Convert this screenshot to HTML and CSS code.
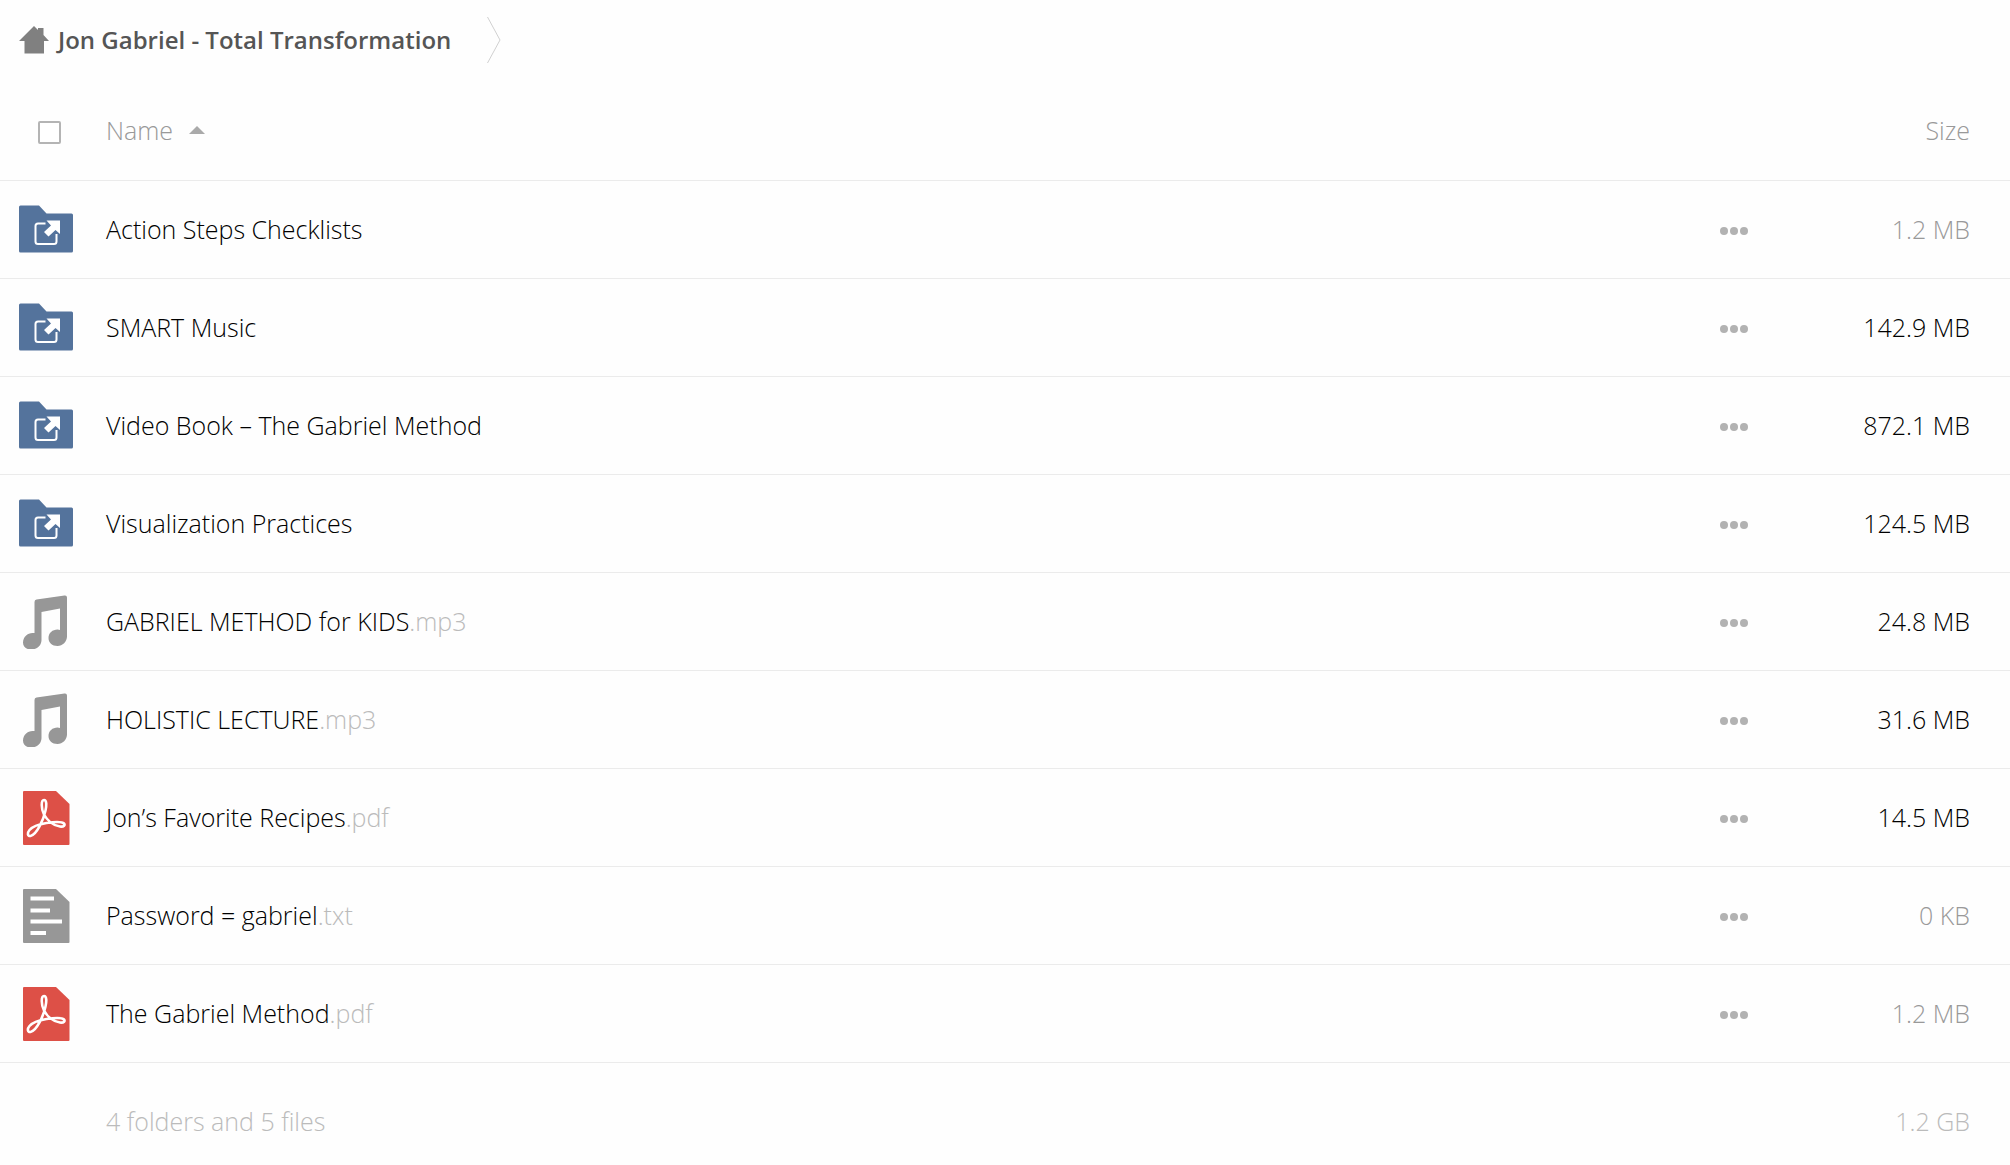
FILE: index.html
```html
<!DOCTYPE html>
<html lang="en">
<head>
    <meta charset="UTF-8">
    <meta name="viewport" content="width=device-width, initial-scale=1.0">
    <title>Jon Gabriel - Total Transformation</title>
    <link rel="stylesheet" href="styles.css">
</head>
<body>
    <!-- Shared icons -->
    <svg class="sprite" aria-hidden="true">
        <symbol id="icon-folder" viewBox="0 0 54 54">
            <path fill="#54739c" d="M1.500 2.500H20L27.500 10.500H52.500A1.500 1.500 0 0 1 54 12V48A1.500 1.500 0 0 1 52.500 49.500H1.500A1.500 1.500 0 0 1 0 48V4A1.500 1.500 0 0 1 1.500 2.500Z"/>
            <path fill="none" stroke="#fff" stroke-width="2" d="M26.500 20.500H19A2.500 2.500 0 0 0 16.500 23V38.500A2.500 2.500 0 0 0 19 41H35A2.500 2.500 0 0 0 37.500 38.500V31"/>
            <path fill="#fff" d="M27.500 17.500H41V31L36.500 27L29.500 33.500L25 29L32 22.500Z"/>
        </symbol>
        <symbol id="icon-music" viewBox="0 0 54 54">
            <path fill="#979797" fill-rule="evenodd" d="M17.500 4.500L45.500 .5Q48 .2 48 2.500V41.500C48 46.500 43.500 51 38.500 51C33 51 29.500 47.500 29.500 43C29.500 38 33.500 34.500 38.500 34.500Q40 34.500 41 35V13.500L22.500 17V45C22.500 50.500 18 54.500 12 54.500C7 54.500 4 51.500 4 47.500C4 42 8.500 38 13.500 38H15.500V7Q15.500 4.800 17.500 4.500Z"/>
        </symbol>
        <symbol id="icon-pdf" viewBox="0 0 54 54">
            <path fill="#dd5047" d="M5 0H37L50.500 13V53Q50.500 54 49.500 54H5Q4 54 4 53V1Q4 0 5 0Z"/>
            <path fill="none" stroke="#fff" stroke-width="2.600" stroke-linejoin="round" d="M25 23.500C28 29 34 34.500 41 35.500C45 36 46.500 34 45 32.500C42.500 30 34 31 27.500 32C20 33.200 13.500 35.500 10.500 39C8 42 8.500 45.500 11.500 45C17.500 44 24.500 29 26.500 19.500C27.500 15 28 9 25 9C22 9 22 17.500 25 23.500Z"/>
        </symbol>
        <symbol id="icon-txt" viewBox="0 0 54 54">
            <path fill="#979797" d="M5 0H37L50.500 13V53Q50.500 54 49.500 54H5Q4 54 4 53V1Q4 0 5 0Z"/>
            <path fill="#fff" d="M11.500 7.500H35V11.500H11.500ZM11.500 19.500H31V23.500H11.500ZM11.500 30.500H43V34.500H11.500ZM11.500 42H27V46H11.500Z"/>
        </symbol>
        <symbol id="icon-dots" viewBox="0 0 28 8">
            <circle cx="4" cy="4" r="4"/>
            <circle cx="14" cy="4" r="4"/>
            <circle cx="24" cy="4" r="4"/>
        </symbol>
    </svg>

    <nav class="breadcrumb">
        <a href="#" class="crumb">
            <svg class="home-icon" viewBox="0 0 30 28" aria-hidden="true">
                <path fill="#808080" d="M0 15L15 0L19 4V2H24.500V9L30 15H25V27.500H5.500V15Z"/>
            </svg>
            <span>Jon Gabriel - Total Transformation</span>
        </a>
        <svg class="crumb-arrow" viewBox="0 0 14 46" aria-hidden="true">
            <path fill="none" stroke="#d0d0d0" d="M.5 0L13 23L.5 46"/>
        </svg>
    </nav>

    <table class="files">
        <thead>
            <tr>
                <th class="col-icon"><input type="checkbox" class="select-all" aria-label="Select all"></th>
                <th class="col-name">
                    <button type="button" class="sort">Name
                        <svg class="sort-arrow" viewBox="0 0 16 8" aria-hidden="true"><path fill="#aaa" d="M0 8L8 0L16 8Z"/></svg>
                    </button>
                </th>
                <th class="col-menu"></th>
                <th class="col-size"><button type="button" class="sort">Size</button></th>
            </tr>
        </thead>
        <tbody>
            <tr>
                <td class="col-icon"><svg class="file-icon"><use href="#icon-folder"/></svg></td>
                <td class="col-name"><a href="#">Action Steps Checklists</a></td>
                <td class="col-menu"><button type="button" class="menu" aria-label="More"><svg><use href="#icon-dots"/></svg></button></td>
                <td class="col-size small">1.2 MB</td>
            </tr>
            <tr>
                <td class="col-icon"><svg class="file-icon"><use href="#icon-folder"/></svg></td>
                <td class="col-name"><a href="#">SMART Music</a></td>
                <td class="col-menu"><button type="button" class="menu" aria-label="More"><svg><use href="#icon-dots"/></svg></button></td>
                <td class="col-size">142.9 MB</td>
            </tr>
            <tr>
                <td class="col-icon"><svg class="file-icon"><use href="#icon-folder"/></svg></td>
                <td class="col-name"><a href="#">Video Book – The Gabriel Method</a></td>
                <td class="col-menu"><button type="button" class="menu" aria-label="More"><svg><use href="#icon-dots"/></svg></button></td>
                <td class="col-size">872.1 MB</td>
            </tr>
            <tr>
                <td class="col-icon"><svg class="file-icon"><use href="#icon-folder"/></svg></td>
                <td class="col-name"><a href="#">Visualization Practices</a></td>
                <td class="col-menu"><button type="button" class="menu" aria-label="More"><svg><use href="#icon-dots"/></svg></button></td>
                <td class="col-size">124.5 MB</td>
            </tr>
            <tr>
                <td class="col-icon"><svg class="file-icon"><use href="#icon-music"/></svg></td>
                <td class="col-name"><a href="#">GABRIEL METHOD for KIDS<span class="ext">.mp3</span></a></td>
                <td class="col-menu"><button type="button" class="menu" aria-label="More"><svg><use href="#icon-dots"/></svg></button></td>
                <td class="col-size">24.8 MB</td>
            </tr>
            <tr>
                <td class="col-icon"><svg class="file-icon"><use href="#icon-music"/></svg></td>
                <td class="col-name"><a href="#">HOLISTIC LECTURE<span class="ext">.mp3</span></a></td>
                <td class="col-menu"><button type="button" class="menu" aria-label="More"><svg><use href="#icon-dots"/></svg></button></td>
                <td class="col-size">31.6 MB</td>
            </tr>
            <tr>
                <td class="col-icon"><svg class="file-icon"><use href="#icon-pdf"/></svg></td>
                <td class="col-name"><a href="#">Jon’s Favorite Recipes<span class="ext">.pdf</span></a></td>
                <td class="col-menu"><button type="button" class="menu" aria-label="More"><svg><use href="#icon-dots"/></svg></button></td>
                <td class="col-size">14.5 MB</td>
            </tr>
            <tr>
                <td class="col-icon"><svg class="file-icon"><use href="#icon-txt"/></svg></td>
                <td class="col-name"><a href="#">Password = gabriel<span class="ext">.txt</span></a></td>
                <td class="col-menu"><button type="button" class="menu" aria-label="More"><svg><use href="#icon-dots"/></svg></button></td>
                <td class="col-size small">0 KB</td>
            </tr>
            <tr>
                <td class="col-icon"><svg class="file-icon"><use href="#icon-pdf"/></svg></td>
                <td class="col-name"><a href="#">The Gabriel Method<span class="ext">.pdf</span></a></td>
                <td class="col-menu"><button type="button" class="menu" aria-label="More"><svg><use href="#icon-dots"/></svg></button></td>
                <td class="col-size small">1.2 MB</td>
            </tr>
        </tbody>
        <tfoot>
            <tr>
                <td class="col-icon"></td>
                <td class="col-name">4 folders and 5 files</td>
                <td class="col-menu"></td>
                <td class="col-size">1.2 GB</td>
            </tr>
        </tfoot>
    </table>
</body>
</html>
```

FILE: styles.css
```css
* {
    box-sizing: border-box;
}

body {
    margin: 0;
    background: #fefefe;
    color: #000;
    font-family: "Open Sans", "Noto Sans", sans-serif;
    font-size: 25px;
    font-weight: 300;
    line-height: 36px;
}

a {
    color: inherit;
    text-decoration: none;
}

button {
    padding: 0;
    border: none;
    background: none;
    color: inherit;
    font: inherit;
    cursor: pointer;
}

svg {
    display: block;
}

.sprite {
    position: absolute;
    width: 0;
    height: 0;
}

.breadcrumb {
    display: flex;
    align-items: center;
    gap: 36px;
    height: 80px;
    padding-left: 19px;
}

.crumb {
    display: flex;
    align-items: center;
    gap: 9px;
    color: #555;
    font-size: 24px;
    font-weight: 600;
}

.home-icon {
    width: 30px;
    height: 28px;
}

.crumb-arrow {
    width: 14px;
    height: 46px;
}

.files {
    width: 100%;
    border-collapse: separate;
    border-spacing: 0;
    table-layout: fixed;
}

.files th,
.files td {
    height: 98px;
    padding: 0 0 2px;
    border-bottom: 1px solid #ebebeb;
    font-weight: 300;
    text-align: left;
    vertical-align: middle;
}

.files th {
    height: 101px;
    padding-bottom: 0;
    color: #999;
}

.files .col-icon {
    width: 106px;
    padding-bottom: 0;
    padding-left: 19px;
}

.files .col-menu {
    width: 100px;
    padding-top: 4px;
}

.files .col-size {
    width: 190px;
    padding-right: 40px;
    text-align: right;
}

.files .small {
    color: #999;
}

.file-icon {
    width: 54px;
    height: 54px;
    overflow: visible;
}

.ext {
    color: #bbb;
}

.select-all {
    display: block;
    width: 23px;
    height: 23px;
    margin: 4px 0 0 19px;
    appearance: none;
    border: 2px solid #b4b4b4;
    border-radius: 2px;
    background: #fff;
}

.sort {
    display: inline-flex;
    align-items: center;
    gap: 16px;
}

.sort-arrow {
    width: 16px;
    height: 8px;
}

.menu {
    display: block;
    fill: #b2b2b2;
}

.menu svg {
    width: 28px;
    height: 8px;
}

.files tfoot td {
    height: 102px;
    padding-top: 16px;
    border-bottom: none;
    color: #bbb;
}
```
